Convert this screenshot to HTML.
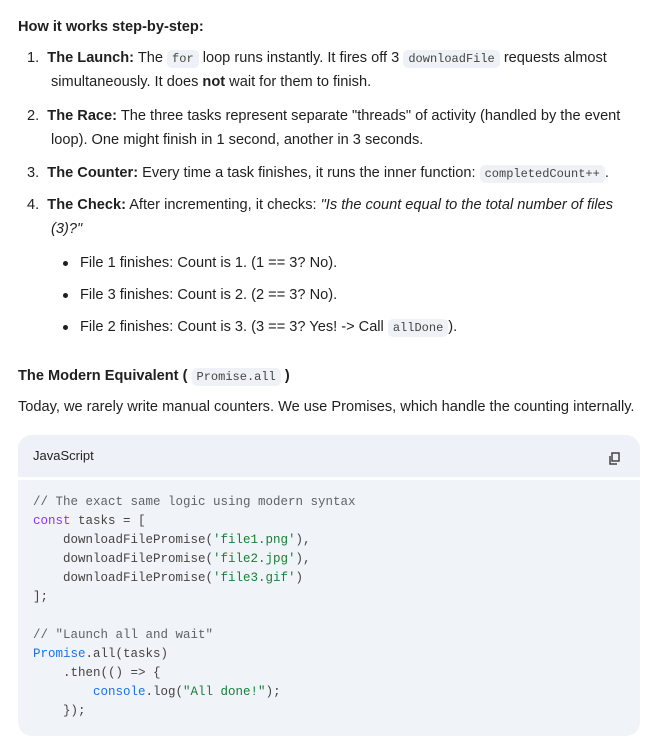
<!DOCTYPE html>
<html><head><meta charset="utf-8"><style>
body{margin:0;width:654px;height:752px;background:#fff;font-family:"Liberation Sans",sans-serif;color:#1f1f1f;font-size:14.6px;position:relative;overflow:hidden}
.l{position:absolute;white-space:nowrap;line-height:24px}
b{font-weight:bold}
code{font-family:"Liberation Mono",monospace;font-size:12px;background:#eef1f6;color:#444;border-radius:5px;padding:2px 5px}
.box{position:absolute;left:18px;top:435px;width:622px;height:301px;border-radius:14px;background:#f0f3f8;overflow:hidden}
.hd{position:absolute;left:0;top:0;width:622px;height:42px;background:#eef1f7;border-bottom:3px solid #fff}
.code{position:absolute;left:15px;top:58px;font-family:"Liberation Mono",monospace;font-size:12.5px;line-height:19px;color:#444;white-space:pre}
.c{color:#5f6368}.k{color:#9334e6}.s{color:#188038}.f{color:#1a73e8}
.dot{position:absolute;width:5px;height:5px;border-radius:50%;background:#1f1f1f}
</style></head><body>
<div class="l" style="left:18px;top:15px"><b>How it works step-by-step:</b></div>
<div class="l" style="left:27px;top:46px">1.&nbsp; <b>The Launch:</b> The <code>for</code> loop runs instantly. It fires off 3 <code>downloadFile</code> requests almost</div>
<div class="l" style="left:51px;top:70px">simultaneously. It does <b>not</b> wait for them to finish.</div>
<div class="l" style="left:27px;top:104px">2.&nbsp; <b>The Race:</b> The three tasks represent separate "threads" of activity (handled by the event</div>
<div class="l" style="left:51px;top:128px">loop). One might finish in 1 second, another in 3 seconds.</div>
<div class="l" style="left:27px;top:161px">3.&nbsp; <b>The Counter:</b> Every time a task finishes, it runs the inner function: <code>completedCount++</code>.</div>
<div class="l" style="left:27px;top:193px">4.&nbsp; <b>The Check:</b> After incrementing, it checks: <i>"Is the count equal to the total number of files</i></div>
<div class="l" style="left:51px;top:217px"><i>(3)?"</i></div>
<div class="dot" style="left:63px;top:261px"></div><div class="l" style="left:80px;top:251px">File 1 finishes: Count is 1. (1 == 3? No).</div>
<div class="dot" style="left:63px;top:293px"></div><div class="l" style="left:80px;top:283px">File 3 finishes: Count is 2. (2 == 3? No).</div>
<div class="dot" style="left:63px;top:325px"></div><div class="l" style="left:80px;top:315px">File 2 finishes: Count is 3. (3 == 3? Yes! -&gt; Call <code>allDone</code>).</div>
<div class="l" style="left:18px;top:364px"><b>The Modern Equivalent (</b> <code>Promise.all</code> <b>)</b></div>
<div class="l" style="left:18px;top:395px">Today, we rarely write manual counters. We use Promises, which handle the counting internally.</div>
<div class="box"><div class="hd"><div class="l" style="left:15px;top:9px;font-size:13px">JavaScript</div>
<svg style="position:absolute;left:591px;top:17px" width="12" height="13" viewBox="0 0 12 13"><rect x="3" y="1" width="7" height="8" fill="none" stroke="#444" stroke-width="1.5"/><path d="M1 4v8h7" fill="none" stroke="#444" stroke-width="1.5"/></svg></div>
<div class="code"><span class="c">// The exact same logic using modern syntax</span>
<span class="k">const</span> tasks = [
    downloadFilePromise(<span class="s">'file1.png'</span>),
    downloadFilePromise(<span class="s">'file2.jpg'</span>),
    downloadFilePromise(<span class="s">'file3.gif'</span>)
];

<span class="c">// "Launch all and wait"</span>
<span class="f">Promise</span>.all(tasks)
    .then(() =&gt; {
        <span class="f">console</span>.log(<span class="s">"All done!"</span>);
    });</div></div>
</body></html>
